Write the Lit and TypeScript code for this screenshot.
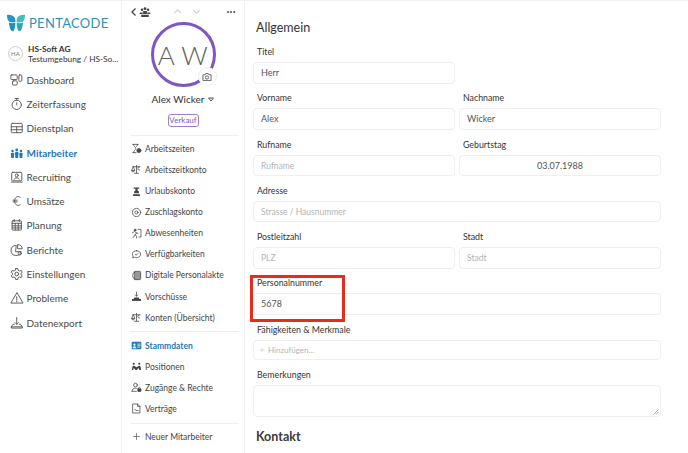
import { LitElement, html, css, svg } from "lit";
import { customElement } from "lit/decorators.js";

const ic: Record<string, any> = {
  dashboard: svg`<rect x="1" y="2" width="7.500" height="5.500" rx="1"/><rect x="3" y="9" width="5.500" height="5" rx="1"/><rect x="10.500" y="2" width="3.500" height="7.500" rx="1"/>`,
  timer: svg`<circle cx="8" cy="9" r="5.500"/><path d="M6 1.500h4M8 1.500v2M8 9V6.500"/>`,
  table: svg`<rect x="1.500" y="2.500" width="13" height="11" rx="1.200"/><path d="M1.500 6.500h13M1.500 10h13M8 6.500v7"/>`,
  people: svg`<g fill="currentColor" stroke="none"><circle cx="3" cy="5.500" r="1.500"/><circle cx="8" cy="4.500" r="1.700"/><circle cx="13" cy="5.500" r="1.500"/><path d="M1 8.500c0-1 4-1 4 0l-.5 5.500h-3zM5.800 7.700c0-1.200 4.400-1.200 4.400 0L9.600 14H6.400zM11 8.500c0-1 4-1 4 0l-.5 5.500h-3z"/></g>`,
  recruit: svg`<rect x="2" y="2.500" width="12" height="10" rx="1"/><circle cx="8" cy="6.200" r="1.800"/><path d="M5 10.500c.6-2 5.400-2 6 0M1.500 14h13"/>`,
  euro: svg`<path d="M12 3.500c-3-2-6.500 0-6.500 4.500s3.500 6.500 6.500 4.500M3.500 7h5M3.500 9h5"/>`,
  cal: svg`<rect x="2.500" y="3" width="11" height="11" rx="1"/><path d="M2.500 6h11M5 1.500V4M11 1.500V4M6.200 6v8M9.800 6v8M2.500 9h11M2.500 11.500h11"/>`,
  pie: svg`<path d="M7 2.500a6 6 0 1 0 6 7.500H7z"/><path d="M9.500 1.500a5 5 0 0 1 5 5h-5z"/><circle cx="11.500" cy="12" r="2"/>`,
  gear: svg`<circle cx="8" cy="8" r="2.200"/><path d="M6.800 1.500h2.400l.4 2 1.700 1 2-.7 1.200 2.100-1.500 1.300v1.600l1.500 1.300-1.200 2.100-2-.7-1.700 1-.4 2H6.800l-.4-2-1.700-1-2 .7-1.200-2.100 1.500-1.300V7.200L1.500 5.900l1.200-2.100 2 .7 1.700-1z"/>`,
  warn: svg`<path d="M8 2 1 14h14zM8 6.500v4M8 11.800v.8"/>`,
  export: svg`<path d="M8 1.500v8M6 7.500l2 2 2-2M5 9.500H3.500L1.500 12.500v1.500h13v-1.500l-2-3H11M1.500 12.500h13"/>`,
  hour: svg`<path d="M2.500 2h8M2.500 14h5M3.500 2c0 3 3.500 4 3.500 6s-3.500 3-3.500 6M9.500 2c0 2-1.500 3-2.500 4"/><circle cx="11.500" cy="11" r="3" fill="currentColor"/>`,
  scale: svg`<path d="M8 2v11M5 13.500h6M3 4h10M3 4 1 9.500h4zM12.500 4a2.500 2.500 0 1 0 .1 5"/><path d="M1 9.500a2 2 0 0 0 4 0"/>`,
  vac: svg`<g fill="currentColor" stroke="none"><path d="M4 2h8v2H9.500v2.500l2 1.500v2.500h-7V8l2-1.500V4H4zM3 12h10v2.500H3z"/></g>`,
  target: svg`<circle cx="8" cy="8" r="6"/><circle cx="8" cy="8" r="2.300"/>`,
  run: svg`<circle cx="6" cy="3" r="1.300" fill="currentColor"/><path d="M2 7l3-2 3 2-2 3 2 2v2.500M6 10l-3 4M8 7l2 1M10.500 2h4v11h-3"/>`,
  chat: svg`<path d="M8 2.500c3.500 0 6 2.200 6 5s-2.500 5-6 5c-1 0-2-.2-2.800-.5L2.500 13l.6-2.700C2.400 9.500 2 8.500 2 7.500c0-2.800 2.500-5 6-5z"/><path d="M5.800 7.500l1.500 1.500 3-2.500"/>`,
  doc: svg`<path d="M5.500 2h7a1.500 1.500 0 0 1 1.500 1.500v9a1.500 1.500 0 0 1-1.500 1.500h-7z" fill="currentColor" fill-opacity=".55"/><path d="M5.500 3.500C3.500 3.500 2.500 5 2.500 8s1 4.500 3 4.500"/>`,
  hand: svg`<path d="M8 1.500v6M6.200 5.800 8 7.600l1.800-1.800" /><path d="M1.500 11.500h13v2.500h-13zM4 11.500c0-1.500 1-2 2-2h4c1 0 2 .5 2 2" fill="currentColor" stroke="none"/><path d="M1.500 12h13v2h-13z" fill="currentColor" stroke="none"/>`,
  card: svg`<rect x="1" y="2.500" width="14" height="11" rx="1.500" fill="currentColor" stroke="none"/><circle cx="5" cy="6.800" r="1.600" fill="#fff" stroke="none"/><path d="M2.800 11c.3-2 4.100-2 4.400 0zM9.500 6h4M9.500 8.300h4M9.500 10.500h3" stroke="#fff" fill="#fff" stroke-width="1"/>`,
  pos: svg`<g fill="currentColor" stroke="none"><circle cx="4" cy="4" r="1.600"/><circle cx="12" cy="4" r="1.600"/><path d="M1.500 13c0-3 .5-6 2.500-6 1.500 0 3 2 4 2s2.500-2 4-2c2 0 2.500 3 2.500 6h-2.500l-.5-3-2.500 2v1H6v-1L3.500 10 3.500 13z"/></g>`,
  user: svg`<circle cx="6.500" cy="4.500" r="2.700"/><path d="M1.500 13.500c0-3 2-4.500 5-4.500 1 0 1.700.2 2.500.5M1.500 13.500H8"/><rect x="10" y="10" width="4.500" height="3.800" fill="currentColor" rx=".5"/><path d="M11 10V9a1.200 1.200 0 0 1 2.400 0v1" stroke-width="1"/>`,
  contract: svg`<path d="M3 1.500h6.500L13 5v9.500H3zM9.500 1.500V5H13"/><path d="M5.500 9.500c1 1.500 2 1.500 5 1.500" />`,
  plus: svg`<path d="M8 2.500v11M2.500 8h11"/>`,
};

const icon = (name: string, cls = "") =>
  html`<svg class="ico ${cls}" viewBox="0 0 16 16" fill="none" stroke="currentColor" stroke-width="1.100" stroke-linecap="round" stroke-linejoin="round">${ic[name]}</svg>`;

const mainNav = [
  ["dashboard", "Dashboard"], ["timer", "Zeiterfassung"], ["table", "Dienstplan"], ["people", "Mitarbeiter"],
  ["recruit", "Recruiting"], ["euro", "Umsätze"], ["cal", "Planung"], ["pie", "Berichte"],
  ["gear", "Einstellungen"], ["warn", "Probleme"], ["export", "Datenexport"],
];
const sub1 = [
  ["hour", "Arbeitszeiten"], ["scale", "Arbeitszeitkonto"], ["vac", "Urlaubskonto"], ["target", "Zuschlagskonto"],
  ["run", "Abwesenheiten"], ["chat", "Verfügbarkeiten"], ["doc", "Digitale Personalakte"], ["hand", "Vorschüsse"], ["scale", "Konten (Übersicht)"],
];
const sub2 = [["card", "Stammdaten"], ["pos", "Positionen"], ["user", "Zugänge & Rechte"], ["contract", "Verträge"]];

@customElement("app-root")
export class AppRoot extends LitElement {
  static styles = css`
    :host { display: block; width: 688px; height: 453px; overflow: hidden; background: #fff; color: #444; font-family: Lato, "Open Sans", sans-serif; }
    * { box-sizing: border-box; }
    .page { display: flex; height: 453px; border-top: 1px solid #f0f0f0; position: relative; }
    .side { width: 122px; flex: none; border-right: 1px solid #f1f1f1; padding: 13px 0 0 7px; }
    .logo { display: flex; align-items: center; gap: 4px; height: 18px; }
    .logo svg { width: 18px; height: 18px; flex: none; }
    .logo span { font-size: 13px; letter-spacing: .3px; color: #2c93b8; }
    .org { display: flex; align-items: center; gap: 5px; margin: 13px 0 0 1px; height: 17px; }
    .ha { width: 15px; height: 15px; border: 1px solid #ccc; border-radius: 50%; font-size: 6px; line-height: 13px; text-align: center; color: #777; flex: none; letter-spacing: .3px; }
    .org div.t { font-size: 8.300px; line-height: 10px; color: #333; white-space: nowrap; }
    .org b { font-weight: 700; }
    .nav { margin-top: 5.500px; display: flex; flex-direction: column; }
    .nav a { display: flex; align-items: center; height: 24.300px; gap: 3px; font-size: 10px; color: #4a4a4a; padding-left: 3px; }
    .nav .ico { width: 13.500px; height: 14px; color: #555; flex: none; }
    .nav a.on, .nav a.on .ico { color: #1f79b8; font-weight: 700; }
    .mid { width: 123px; flex: none; border-right: 1px solid #f1f1f1; padding: 0 5px 0 8px; display: flex; flex-direction: column; }
    .top { display: flex; align-items: center; height: 21px; color: #444; }
    .top .back { width: 8px; height: 10px; }
    .top .grp { width: 12px; height: 12px; margin-left: 1px; color: #444; }
    .top .arrows { display: flex; gap: 10px; margin-left: 22px; }
    .top .arrows svg { width: 9px; height: 5px; color: #aaa; }
    .top .dots { margin-left: auto; margin-right: 3px; font-size: 5px; line-height: 8px; letter-spacing: .3px; color: #555; }
    .avwrap { align-self: center; position: relative; width: 65px; height: 65px; margin-left: -3px; }
    .av { width: 65px; height: 65px; border: 3px solid #7e57c2; border-radius: 50%; display: flex; align-items: center; justify-content: center; font-size: 26px; font-weight: 300; letter-spacing: .5px; color: #5e5e5e; white-space: nowrap; }
    .cam { position: absolute; right: -1px; bottom: 1px; width: 19px; height: 19px; border-radius: 50%; background: #fff; border: 1px solid #eee; display: flex; align-items: center; justify-content: center; color: #555; }
    .cam svg { width: 10px; height: 10px; }
    .name { display: flex; justify-content: center; align-items: center; gap: 4px; margin-top: 5px; height: 14px; font-size: 10px; color: #333; margin-left: -3px; }
    .name svg { width: 6px; height: 5px; color: #555; }
    .badge { align-self: center; margin: 8px 0 0 -3px; height: 13px; line-height: 11px; width: 31px; text-align: center; border: 1px solid #9b7fd4; border-radius: 3px; font-size: 8px; color: #7e57c2; }
    .sep { height: 1px; background: #eee; }
    .sep.a { margin-top: 7.500px; }
    .list { display: flex; flex-direction: column; padding: 2.800px 0 3.200px; }
    .list a { display: flex; align-items: center; height: 21.100px; gap: 3px; font-size: 8.500px; color: #444; }
    .list .ico { width: 11px; height: 11px; color: #444; flex: none; margin-left: 1px; }
    .list a.on, .list a.on .ico { color: #1f79b8; font-weight: 700; }
    .new { display: flex; align-items: center; gap: 4px; font-size: 8.500px; color: #444; height: 26px; padding-left: 2px; }
    .new .ico { width: 9px; height: 9px; }
    .main { flex: 1; padding: 0 27px 0 8px; min-width: 0; }
    h2 { margin: 0; font-weight: 400; font-size: 12.500px; color: #333; }
    h2.g { height: 43px; padding: 19px 0 0 3px; line-height: 16px; }
    h2.k { padding: 12px 0 0 3px; line-height: 16px; font-weight: 700; color: #3a3a3a; }
    .row { display: grid; grid-template-columns: 1fr 1fr; column-gap: 4px; }
    .f { display: flex; flex-direction: column; height: 46.300px; }
    .f.wide { grid-column: 1 / -1; }
    .f label { font-size: 8.800px; height: 14px; line-height: 14px; padding-top: 1px; margin: 0 0 4px 4px; color: #333; }
    .inp { height: 21.500px; border: 1px solid #efefef; border-radius: 4px; padding: 0 0 0 7px; font-size: 9px; line-height: 20px; color: #555; }
    .inp.ph { color: #b4b4b4; font-size: 8.500px; }
    .inp.c { text-align: center; padding: 0; }
    .inp.tag { height: 20.500px; padding-left: 5px; font-size: 8px; line-height: 19px; display: flex; align-items: center; gap: 3px; }
    .inp.tag .ico { width: 6px; height: 6px; }
    .inp.area { height: 32px; position: relative; }
    .grip { position: absolute; right: 1px; bottom: 1px; width: 6px; height: 6px; color: #888; }
    .half { width: 202px; }
    .f.sm { height: 45.500px; }
    .f.auto { height: auto; }
    .mark { position: absolute; left: 250px; top: 274px; width: 95px; height: 47px; border: 3px solid #e62c1e; pointer-events: none; }
  `;

  field(label: string, value: string, opts: { ph?: boolean; c?: boolean; wide?: boolean } = {}) {
    return html`<div class="f ${opts.wide ? "wide" : ""}"><label>${label}</label><div class="inp ${opts.ph ? "ph" : ""} ${opts.c ? "c" : ""}">${value}</div></div>`;
  }

  render() {
    return html`<div class="page">
      <aside class="side">
        <div class="logo">
          <svg viewBox="0 0 18 18">
            <path fill="#2a93c4" d="M0 1c3-.6 6 .2 7.500 2.500.8 1.300 1 3 1 4.500-2 .8-5.500.6-7-1C.3 5.500 0 3 0 1z"/>
            <path fill="#1f8fb4" d="M2 8.500c2 .8 4.500.8 6.300.2.100 3-.3 6-1.800 8.300-1.500.8-3-1-3.700-3.500C2.400 12 2 10 2 8.500z"/>
            <path fill="#3ec0bd" d="M18 1c-3-.6-6 .2-7.500 2.500-.8 1.300-1 3-1 4.500 2 .8 5.500.6 7-1 1.200-1.500 1.500-4 1.500-6z"/>
            <path fill="#2aa8bd" d="M16 8.500c-2 .8-4.500.8-6.300.2-.1 3 .3 6 1.800 8.300 1.500.8 3-1 3.700-3.500.4-1.500.8-3.500.8-5z"/>
          </svg>
          <span>PENTACODE</span>
        </div>
        <div class="org"><div class="ha">HA</div><div class="t"><b>HS-Soft AG</b><br />Testumgebung / HS-So...</div></div>
        <nav class="nav">
          ${mainNav.map(([i, t]) => html`<a class=${t === "Mitarbeiter" ? "on" : ""}>${icon(i)}<span>${t}</span></a>`)}
        </nav>
      </aside>
      <section class="mid">
        <div class="top">
          <svg class="back" viewBox="0 0 8 10" fill="none" stroke="currentColor" stroke-width="1.300"><path d="M5.500 1.500 2 5l3.500 3.500"/></svg>
          <svg class="grp" viewBox="0 0 16 16" fill="currentColor"><circle cx="4" cy="5" r="1.700"/><circle cx="8" cy="3.500" r="1.900"/><circle cx="12" cy="5" r="1.700"/><path d="M1 8.500h4v2H1zM11 8.500h4v2h-4zM5.500 6.500h5v4h-5zM3 11.500h10v3H3z"/></svg>
          <div class="arrows">
            <svg viewBox="0 0 10 6" fill="none" stroke="currentColor"><path d="M1 5 5 1l4 4"/></svg>
            <svg viewBox="0 0 10 6" fill="none" stroke="currentColor"><path d="M1 1l4 4 4-4"/></svg>
          </div>
          <span class="dots">•••</span>
        </div>
        <div class="avwrap">
          <div class="av">A W</div>
          <div class="cam"><svg viewBox="0 0 16 16" fill="none" stroke="currentColor" stroke-width="1.400"><path d="M1.500 4.500h3.500l1-2h4l1 2h3.500v9h-13z"/><circle cx="8" cy="8.800" r="2.600"/></svg></div>
        </div>
        <div class="name"><span>Alex Wicker</span><svg viewBox="0 0 6 5" fill="none" stroke="currentColor"><path d="M.5 1h5L3 4z"/></svg></div>
        <div class="badge">Verkauf</div>
        <div class="sep a"></div>
        <div class="list">${sub1.map(([i, t]) => html`<a>${icon(i)}<span>${t}</span></a>`)}</div>
        <div class="sep"></div>
        <div class="list">${sub2.map(([i, t]) => html`<a class=${t === "Stammdaten" ? "on" : ""}>${icon(i)}<span>${t}</span></a>`)}</div>
        <div class="sep"></div>
        <div class="new">${icon("plus")}<span>Neuer Mitarbeiter</span></div>
      </section>
      <main class="main">
        <h2 class="g">Allgemein</h2>
        <div class="half">${this.field("Titel", "Herr")}</div>
        <div class="row">${this.field("Vorname", "Alex")}${this.field("Nachname", "Wicker")}</div>
        <div class="row">${this.field("Rufname", "Rufname", { ph: true })}${this.field("Geburtstag", "03.07.1988", { c: true })}</div>
        <div class="row">${this.field("Adresse", "Strasse / Hausnummer", { ph: true, wide: true })}</div>
        <div class="row">${this.field("Postleitzahl", "PLZ", { ph: true })}${this.field("Stadt", "Stadt", { ph: true })}</div>
        <div class="row">${this.field("Personalnummer", "5678", { wide: true })}</div>
        <div class="f sm"><label>Fähigkeiten & Merkmale</label><div class="inp ph tag">${icon("plus")}<span>Hinzufügen...</span></div></div>
        <div class="f auto"><label>Bemerkungen</label><div class="inp area"><svg class="grip" viewBox="0 0 6 6" fill="none" stroke="currentColor" stroke-width=".7"><path d="M5.500.5l-5 5M5.500 3l-2.500 2.500"/></svg></div></div>
        <h2 class="k">Kontakt</h2>
      </main>
      <div class="mark"></div>
    </div>`;
  }
}
